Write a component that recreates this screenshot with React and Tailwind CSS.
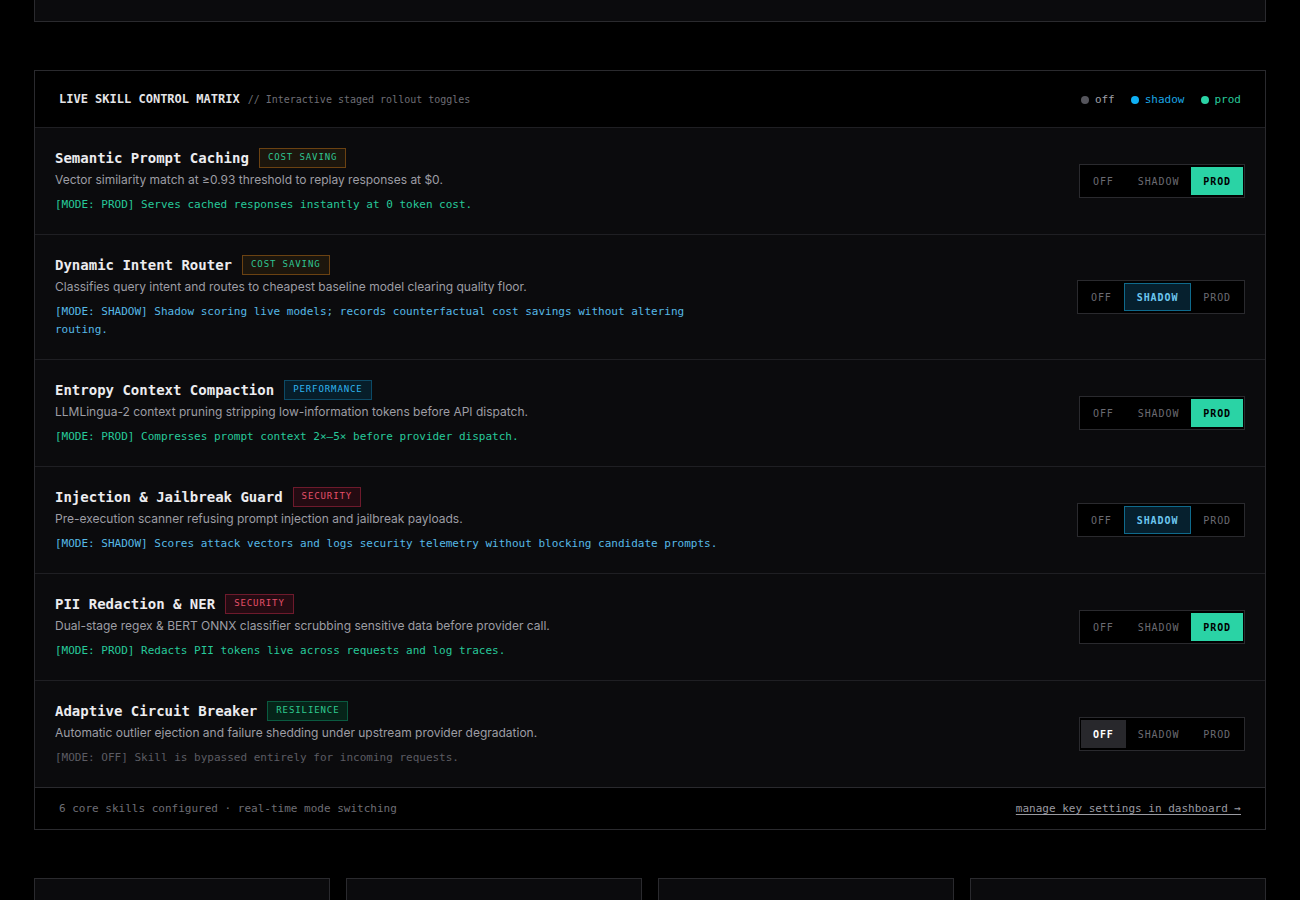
import React, { useState } from 'react';

const mono = { fontFamily: '"DejaVu Sans Mono", "Liberation Mono", monospace' };
const sans = { fontFamily: 'Inter, "Noto Sans", sans-serif' };

const skills = [
  {
    id: 'cache',
    name: 'Semantic Prompt Caching',
    tag: 'COST SAVING',
    tagClass: 'border-[#6b4212] bg-[#1c160d] text-[#2fc593]',
    desc: 'Vector similarity match at ≥0.93 threshold to replay responses at $0.',
    mode: 'prod',
    notes: {
      prod: 'Serves cached responses instantly at 0 token cost.',
    },
  },
  {
    id: 'router',
    name: 'Dynamic Intent Router',
    tag: 'COST SAVING',
    tagClass: 'border-[#6b4212] bg-[#1c160d] text-[#2fc593]',
    desc: 'Classifies query intent and routes to cheapest baseline model clearing quality floor.',
    mode: 'shadow',
    notes: {
      shadow: 'Shadow scoring live models; records counterfactual cost savings without altering routing.',
    },
  },
  {
    id: 'compaction',
    name: 'Entropy Context Compaction',
    tag: 'PERFORMANCE',
    tagClass: 'border-[#0c4a66] bg-[#071e2a] text-[#2fb4ee]',
    desc: 'LLMLingua-2 context pruning stripping low-information tokens before API dispatch.',
    mode: 'prod',
    notes: {
      prod: 'Compresses prompt context 2×–5× before provider dispatch.',
    },
  },
  {
    id: 'guard',
    name: 'Injection & Jailbreak Guard',
    tag: 'SECURITY',
    tagClass: 'border-[#6e1a2c] bg-[#240b12] text-[#e4506a]',
    desc: 'Pre-execution scanner refusing prompt injection and jailbreak payloads.',
    mode: 'shadow',
    notes: {
      shadow: 'Scores attack vectors and logs security telemetry without blocking candidate prompts.',
    },
  },
  {
    id: 'pii',
    name: 'PII Redaction & NER',
    tag: 'SECURITY',
    tagClass: 'border-[#6e1a2c] bg-[#240b12] text-[#e4506a]',
    desc: 'Dual-stage regex & BERT ONNX classifier scrubbing sensitive data before provider call.',
    mode: 'prod',
    notes: {
      prod: 'Redacts PII tokens live across requests and log traces.',
    },
  },
  {
    id: 'breaker',
    name: 'Adaptive Circuit Breaker',
    tag: 'RESILIENCE',
    tagClass: 'border-[#0a5a40] bg-[#062419] text-[#2fc98f]',
    desc: 'Automatic outlier ejection and failure shedding under upstream provider degradation.',
    mode: 'off',
    notes: {
      off: 'Skill is bypassed entirely for incoming requests.',
    },
  },
];

const fallbackNotes = {
  off: 'Skill is bypassed entirely for incoming requests.',
  shadow: 'Runs alongside live traffic and records results without affecting responses.',
  prod: 'Active on all live traffic.',
};

const modeText = {
  off: 'text-[#5c5c63]',
  shadow: 'text-[#56b9e6]',
  prod: 'text-[#27c99a]',
};

function ModeToggle({ mode, onChange }) {
  const btn = 'h-7 px-3 text-[10px] tracking-[0.09em]';
  return (
    <div className="flex items-center border border-[#2a2a2e] bg-black px-px py-0.5" style={mono}>
      <button
        onClick={() => onChange('off')}
        className={`${btn} ${mode === 'off' ? 'bg-[#28282c] font-bold text-white' : 'text-[#6b6b72]'}`}
      >
        OFF
      </button>
      <button
        onClick={() => onChange('shadow')}
        className={`${btn} ${
          mode === 'shadow'
            ? 'border border-[#0f6a8c] bg-[#06202e] font-bold text-[#6cc6ef]'
            : 'text-[#6b6b72]'
        }`}
      >
        SHADOW
      </button>
      <button
        onClick={() => onChange('prod')}
        className={`${btn} ${mode === 'prod' ? 'bg-[#2ad3a5] font-bold text-black' : 'text-[#6b6b72]'}`}
      >
        PROD
      </button>
    </div>
  );
}

function SkillRow({ skill, mode, onChange }) {
  const note = skill.notes[mode] || fallbackNotes[mode];
  return (
    <div className="flex items-center justify-between border-t border-[#1f1f23] bg-[#0b0b0d] px-5 pt-5 pb-5">
      <div>
        <div className="flex h-5 items-center gap-2.5">
          <h3 className="text-[14px] font-bold text-[#ececef]" style={mono}>
            {skill.name}
          </h3>
          <span
            className={`flex h-5 items-center border px-2 text-[9px] tracking-widest ${skill.tagClass}`}
            style={mono}
          >
            {skill.tag}
          </span>
        </div>
        <p className="mt-0.5 text-[12px] leading-5 text-[#9d9da4]" style={sans}>
          {skill.desc}
        </p>
        <p className={`mt-1.5 max-w-[672px] text-[11px] leading-[18px] ${modeText[mode]}`} style={mono}>
          [MODE: {mode.toUpperCase()}] {note}
        </p>
      </div>
      <ModeToggle mode={mode} onChange={onChange} />
    </div>
  );
}

export default function App() {
  const [modes, setModes] = useState(
    Object.fromEntries(skills.map((s) => [s.id, s.mode]))
  );

  const setMode = (id, m) => setModes((prev) => ({ ...prev, [id]: m }));

  return (
    <div className="min-h-screen bg-black px-[34px]">
      {/* previous section, scrolled mostly out of view */}
      <div className="h-[22px] border-x border-b border-[#2a2a2e] bg-[#0b0b0d]" />

      <section className="mt-12 border border-[#2a2a2e] bg-black">
        <div className="flex h-14 items-center justify-between px-6" style={mono}>
          <div className="flex items-baseline gap-2">
            <h2 className="text-[12px] font-bold text-[#e4e4e7]">LIVE SKILL CONTROL MATRIX</h2>
            <span className="text-[10px] text-[#6e6e75]">// Interactive staged rollout toggles</span>
          </div>
          <div className="flex items-center gap-4 pt-0.5 text-[11px]">
            <span className="flex items-center gap-1.5 text-[#a1a1a8]">
              <span className="h-2 w-2 rounded-full bg-[#55555c]" />
              off
            </span>
            <span className="flex items-center gap-1.5 text-[#1ba6e4]">
              <span className="h-2 w-2 rounded-full bg-[#0fb0f5]" />
              shadow
            </span>
            <span className="flex items-center gap-1.5 text-[#27c99a]">
              <span className="h-2 w-2 rounded-full bg-[#2ad3a5]" />
              prod
            </span>
          </div>
        </div>

        {skills.map((s) => (
          <SkillRow key={s.id} skill={s} mode={modes[s.id]} onChange={(m) => setMode(s.id, m)} />
        ))}

        <div
          className="flex h-[42px] items-center justify-between border-t border-[#2a2a2e] px-6 pt-0.5 text-[11px]"
          style={mono}
        >
          <span className="text-[#6e6e75]">6 core skills configured · real-time mode switching</span>
          <a href="#" className="text-[#9a9aa1] underline underline-offset-2">
            manage key settings in dashboard →
          </a>
        </div>
      </section>

      <div className="mt-12 grid grid-cols-4 gap-4">
        <div className="h-32 border border-[#2a2a2e] bg-[#0b0b0d]" />
        <div className="h-32 border border-[#2a2a2e] bg-[#0b0b0d]" />
        <div className="h-32 border border-[#2a2a2e] bg-[#0b0b0d]" />
        <div className="h-32 border border-[#2a2a2e] bg-[#0b0b0d]" />
      </div>
    </div>
  );
}
